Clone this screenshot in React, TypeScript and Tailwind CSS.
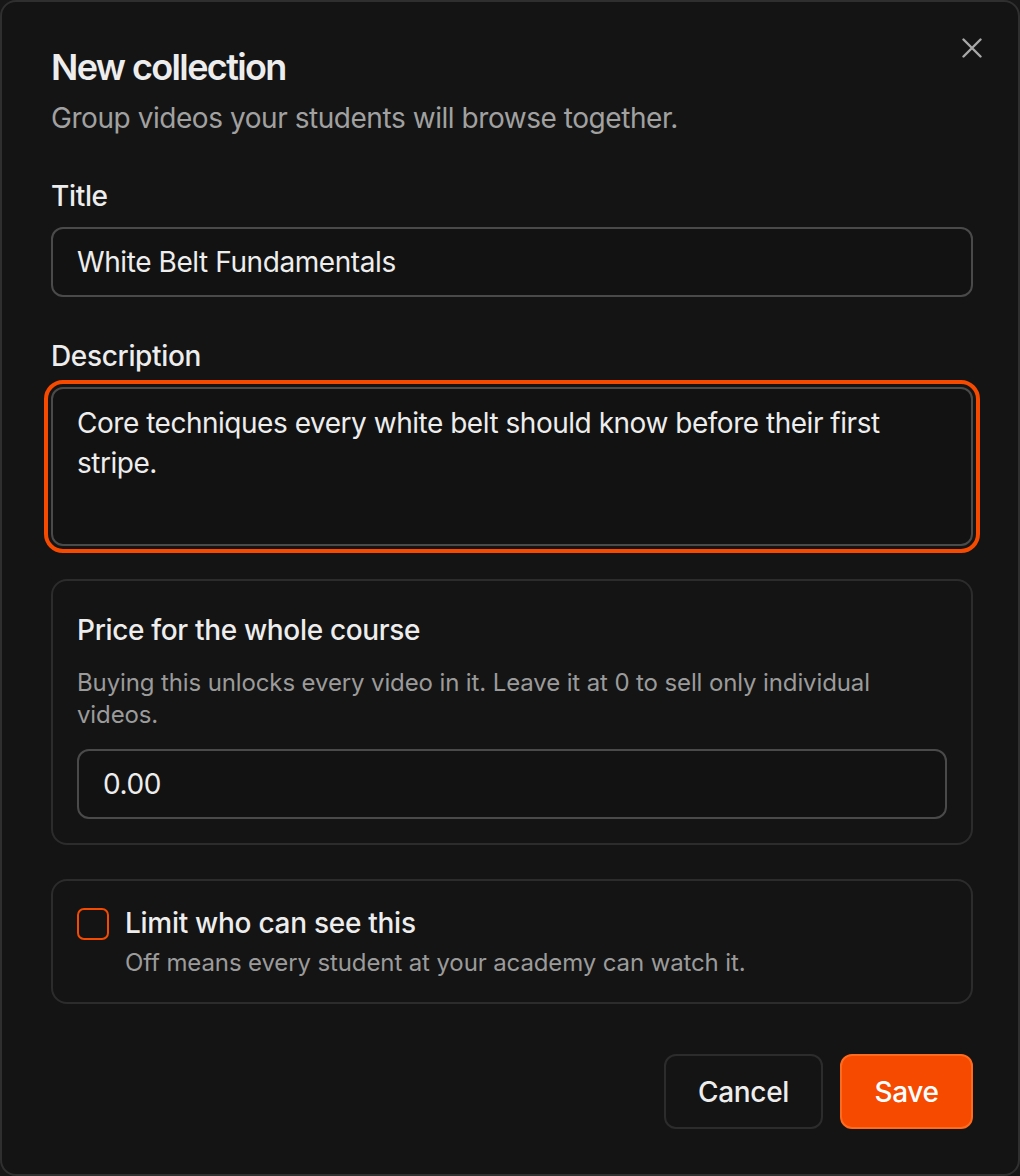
import { useState } from 'react'

const font = { fontFamily: 'Inter, "Noto Sans", sans-serif' }

export default function App() {
  const [title, setTitle] = useState('White Belt Fundamentals')
  const [description, setDescription] = useState('Core techniques every white belt should know before their first stripe.')
  const [price, setPrice] = useState('0.00')
  const [limited, setLimited] = useState(false)

  return (
    <div className="w-[1020px] h-[1176px] bg-[#171717]" style={font}>
      <div className="relative h-full w-full rounded-[16px] border-2 border-[#2f2f2f] bg-[#141414] pl-[49px] pr-[45px] pt-[43px] pb-[45px] text-[#ededed]">
        <button className="absolute right-[26px] top-[26px] flex h-[40px] w-[40px] items-center justify-center text-[#a8a8a8]">
          <svg width="20" height="20" viewBox="0 0 20 20" fill="none" stroke="currentColor" strokeWidth="2.4" strokeLinecap="round">
            <path d="M1.5 1.5 18.5 18.5M18.5 1.5 1.5 18.5" />
          </svg>
        </button>

        <h2 className="text-[36px] leading-[44px] font-semibold tracking-[-0.045em]">New collection</h2>
        <p className="mt-[11px] text-[28px] leading-[36px] tracking-[-0.016em] text-[#a1a1a1]">Group videos your students will browse together.</p>

        <div className="mt-[42px]">
          <label className="block text-[28px] leading-[36px] font-medium tracking-[-0.012em]">Title</label>
          <input
            value={title}
            onChange={(e) => setTitle(e.target.value)}
            className="mt-[13px] block h-[70px] w-full rounded-[12px] border-2 border-[#4a4a4a] bg-[#121212] px-[24px] text-[28px] tracking-[-0.015em] outline-none"
          />
        </div>

        <div className="mt-[41px]">
          <label className="block text-[28px] leading-[36px] font-medium tracking-[-0.012em]">Description</label>
          <textarea
            value={description}
            onChange={(e) => setDescription(e.target.value)}
            className="mt-[13px] block h-[159px] w-full resize-none rounded-[12px] border-2 border-[#4a4a4a] bg-[#121212] px-[24px] py-[14px] text-[28px] leading-[40px] tracking-[-0.017em] outline-[4px] outline-offset-[3px] outline-solid outline-[#f54a00]"
          />
        </div>

        <div className="mt-[33px] rounded-[16px] border-2 border-[#2c2c2c] px-[24px] pt-[31px] pb-[24px]">
          <div className="text-[28px] leading-[36px] font-medium tracking-[-0.012em]">Price for the whole course</div>
          <p className="mt-[19px] text-[24px] leading-[32px] tracking-[-0.005em] text-[#9b9b9b]">
            Buying this unlocks every video in it. Leave it at 0 to sell only individual videos.
          </p>
          <input
            value={price}
            onChange={(e) => setPrice(e.target.value)}
            className="mt-[18px] block h-[70px] w-full rounded-[12px] border-2 border-[#4a4a4a] bg-[#121212] px-[24px] text-[28px] tracking-[-0.015em] outline-none"
          />
        </div>

        <div className="mt-[34px] flex gap-[16px] rounded-[16px] border-2 border-[#2c2c2c] px-[24px] pt-[24px] pb-[23px]">
          <button
            onClick={() => setLimited(!limited)}
            className={`mt-[3px] h-[32px] w-[32px] shrink-0 rounded-[7px] border-2 border-[#f54a00] ${limited ? 'bg-[#f54a00]' : 'bg-transparent'}`}
          />
          <div>
            <div className="text-[28px] leading-[36px] font-medium tracking-[-0.01em]">Limit who can see this</div>
            <p className="mt-[6px] text-[24px] leading-[32px] tracking-[-0.005em] text-[#9b9b9b]">Off means every student at your academy can watch it.</p>
          </div>
        </div>

        <div className="mt-[50px] flex justify-end gap-[17px]">
          <button className="h-[75px] w-[159px] rounded-[12px] border-2 border-[#2c2c2c] text-[28px] font-medium tracking-[-0.012em]">Cancel</button>
          <button className="h-[75px] w-[133px] rounded-[12px] border-2 border-[#ff6a1f] bg-[#f54a00] text-[28px] font-medium tracking-[-0.012em] text-white">Save</button>
        </div>
      </div>
    </div>
  )
}
